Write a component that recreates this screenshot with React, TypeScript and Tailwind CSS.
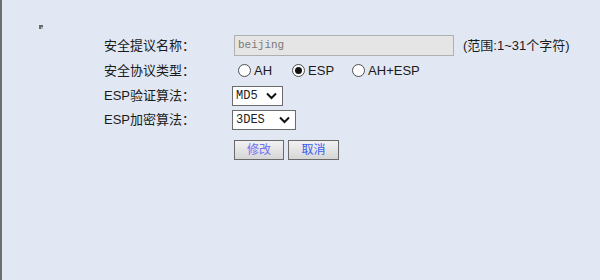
import React from "react";

const sans = { fontFamily: '"Liberation Sans", "Noto Sans CJK SC", sans-serif' };
const mono = { fontFamily: '"Liberation Mono", "Noto Sans CJK SC", monospace' };

function Radio({ checked }: { checked?: boolean }) {
  return (
    <span className="flex h-[13px] w-[13px] items-center justify-center rounded-full border border-[#4d4d4d] bg-white">
      {checked && <span className="block h-[7px] w-[7px] rounded-full bg-[#111]" />}
    </span>
  );
}

function Select({ value, width }: { value: string; width: string }) {
  return (
    <div
      className={`flex h-[20px] ${width} items-center justify-between border border-[#6b6b6b] bg-white pl-[3px] pr-[5px] text-[12px] text-[#222]`}
      style={mono}
    >
      <span>{value}</span>
      <svg width="11" height="8" viewBox="0 0 11 8">
        <polyline points="1,1.5 5.5,6 10,1.5" fill="none" stroke="#111" strokeWidth="2" />
      </svg>
    </div>
  );
}

export default function App() {
  return (
    <div className="min-h-[280px] w-full border-l-[2px] border-[#6e6e6e] bg-[#e1e8f3] pt-[25px] text-[13px] text-[#1a1a1a]" style={sans}>
      <div className="ml-[37px] h-[4px] w-[4px] border-l-[2px] border-t-[2px] border-[#6a6a6a] bg-[#b8b8b8]" />
      <div className="mt-[4px] flex flex-col pl-[102px]">
        <div className="flex h-[25px] items-center">
          <div className="w-[130px]">安全提议名称：</div>
          <div className="flex h-[21px] w-[220px] items-center border border-[#b0b0b0] bg-[#e5e5e5] pl-[3px] text-[11px] text-[#7a7a7a]" style={mono}>
            beijing
          </div>
          <div className="ml-[9px]">(范围:1~31个字符)</div>
        </div>
        <div className="flex h-[25px] items-center">
          <div className="w-[130px]">安全协议类型：</div>
          <div className="ml-[4px] flex items-center">
            <Radio />
            <span className="ml-[3px]">AH</span>
          </div>
          <div className="ml-[20px] flex items-center">
            <Radio checked />
            <span className="ml-[3px]">ESP</span>
          </div>
          <div className="ml-[18px] flex items-center">
            <Radio />
            <span className="ml-[3px]">AH+ESP</span>
          </div>
        </div>
        <div className="flex h-[25px] items-center">
          <div className="w-[128px]">ESP验证算法：</div>
          <Select value="MD5" width="w-[51px]" />
        </div>
        <div className="flex h-[24px] items-center">
          <div className="w-[128px]">ESP加密算法：</div>
          <Select value="3DES" width="w-[64px]" />
        </div>
        <div className="ml-[130px] mt-[8px] flex gap-[4px]">
          <button className="h-[20px] w-[50px] border border-[#6a6a6a] bg-gradient-to-b from-[#f2f2f2] to-[#d6d6d6] text-[12px] text-[#6e72f0]">
            修改
          </button>
          <button className="h-[20px] w-[51px] border border-[#6a6a6a] bg-gradient-to-b from-[#f2f2f2] to-[#d6d6d6] text-[12px] text-[#3a5cf2]">
            取消
          </button>
        </div>
      </div>
    </div>
  );
}
